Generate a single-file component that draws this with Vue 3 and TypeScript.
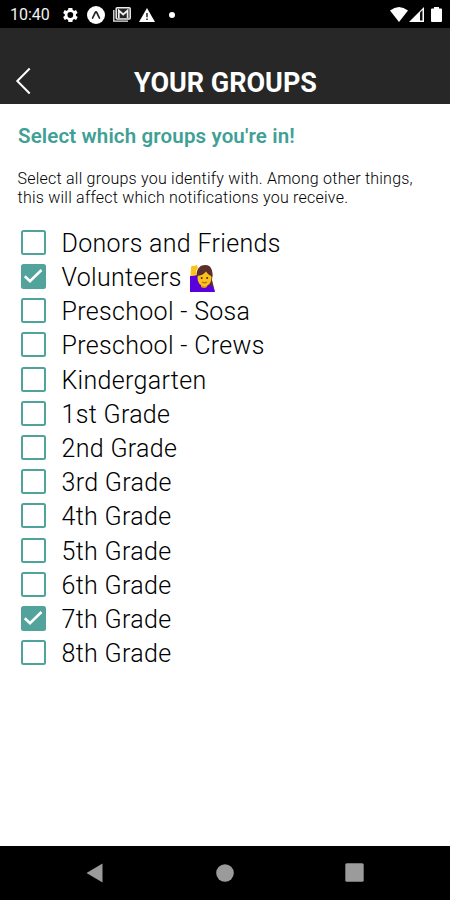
<script setup lang="ts">
import { ref } from 'vue'

interface Group {
  name: string
  selected: boolean
  emoji?: boolean
}

const groups = ref<Group[]>([
  { name: 'Donors and Friends', selected: false },
  { name: 'Volunteers', selected: true, emoji: true },
  { name: 'Preschool - Sosa', selected: false },
  { name: 'Preschool - Crews', selected: false },
  { name: 'Kindergarten', selected: false },
  { name: '1st Grade', selected: false },
  { name: '2nd Grade', selected: false },
  { name: '3rd Grade', selected: false },
  { name: '4th Grade', selected: false },
  { name: '5th Grade', selected: false },
  { name: '6th Grade', selected: false },
  { name: '7th Grade', selected: true },
  { name: '8th Grade', selected: false },
])

function toggle(group: Group): void {
  group.selected = !group.selected
}
</script>

<template>
  <div class="screen">
    <div class="status">
      <span class="clock">10:40</span>
      <svg class="gear" width="16" height="16" viewBox="2 2 20 20">
        <path fill="#fff" fill-rule="evenodd" d="M19.4 13a7.5 7.5 0 0 0 0-2l2.1-1.6-2-3.5-2.5 1a7.5 7.5 0 0 0-1.7-1L15 3.200h-5l-.4 2.700a7.500 7.500 0 0 0-1.700 1l-2.500-1-2 3.500L5.500 11a7.500 7.500 0 0 0 0 2l-2.100 1.600 2 3.500 2.500-1a7.500 7.500 0 0 0 1.700 1l.4 2.700h5l.4-2.700a7.500 7.500 0 0 0 1.700-1l2.500 1 2-3.500zM12.400 15.600a3.600 3.600 0 1 1 0-7.200 3.600 3.600 0 0 1 0 7.200z" />
      </svg>
      <svg class="expo" width="18" height="18" viewBox="0 0 18 18">
        <circle cx="9" cy="9" r="9" fill="#fff" />
        <path d="M5.600 12 8.200 6.600q.8-1.400 1.600 0l2.600 5.400" fill="none" stroke="#222" stroke-width="1.700" stroke-linecap="round" />
      </svg>
      <svg class="mail" width="18" height="15" viewBox="0 0 18 15">
        <path d="M.8 3v11.200H15" fill="none" stroke="#eee" stroke-width="1.300" />
        <rect x="3.200" y=".8" width="14" height="11.200" rx="1" fill="#222" stroke="#eee" stroke-width="1.500" />
        <path d="M5.800 11V3.500l4.400 4 4.400-4V11" fill="none" stroke="#eee" stroke-width="1.700" />
      </svg>
      <svg class="warning" width="16" height="14" viewBox="0 0 16 14">
        <path d="M8 0 16 14H0z" fill="#fff" />
        <path d="M8 5v4.200M8 10.500v1.600" stroke="#222" stroke-width="1.500" />
      </svg>
      <span class="more" />
      <svg class="wifi" width="18" height="15" viewBox="0 0 18 15">
        <path d="M0 3.500Q9-3.500 18 3.500L9 15z" fill="#fff" />
      </svg>
      <svg class="signal" width="15" height="15" viewBox="0 0 15 15">
        <path d="M15 0v15H0z" fill="#fff" />
        <path d="M11 5.500 13.500 3v10.500H11z" fill="#111" />
      </svg>
      <svg class="battery" width="11" height="15" viewBox="0 0 11 15">
        <path d="M3 0h5v1.500h2q1 0 1 1V14q0 1-1 1H1q-1 0-1-1V2.500q0-1 1-1h2z" fill="#fff" />
      </svg>
    </div>

    <header class="header">
      <button class="back" aria-label="Back">
        <svg width="16" height="28" viewBox="0 0 16 28">
          <path d="M14.700 1.500 2.300 14l12.400 12.500" fill="none" stroke="#fff" stroke-width="2" />
        </svg>
      </button>
      <h1 class="title">YOUR GROUPS</h1>
    </header>

    <main class="content">
      <h2 class="heading">Select which groups you're in!</h2>
      <p class="description">Select all groups you identify with. Among other things,<br />this will affect which notifications you receive.</p>
      <ul class="groups">
        <li v-for="group in groups" :key="group.name" class="group" @click="toggle(group)">
          <span class="box" :class="{ checked: group.selected }">
            <svg v-if="group.selected" width="24" height="24" viewBox="0 0 24 24">
              <path d="m3.800 12.300 5.200 5L20.500 6" fill="none" stroke="#fff" stroke-width="2.600" />
            </svg>
          </span>
          <span class="name">{{ group.name }}</span>
          <svg v-if="group.emoji" class="emoji" width="27" height="29" viewBox="0 0 27 29">
            <path d="M8 24C6 12 7 1 16 1c8 0 8 8 7 15l2 8z" fill="#5b302b" />
            <path d="M1 28V12l7-1 2 9q9-1 14 3 2 2 2 5z" fill="#5a00dc" />
            <path d="M1.500 12 2 3q1-2 3-1l3-1 1 3-2 3 1 4z" fill="#fcc21b" />
            <path d="M12 20h6v3q-3 2-6 0z" fill="#e59600" />
            <ellipse cx="15.500" cy="14" rx="7" ry="8.500" fill="#fcc21b" />
            <path d="M8 12Q8.500 3.500 16 3.500t7.500 9q-4-1-6.500-5-3 4-9 4.500z" fill="#5b302b" />
            <circle cx="12.700" cy="14" r="1" fill="#4d2b22" />
            <circle cx="18.200" cy="14" r="1" fill="#4d2b22" />
            <path d="M13 18q2.500 1.800 5 0" fill="none" stroke="#b56b15" stroke-width="1.200" />
          </svg>
        </li>
      </ul>
    </main>

    <nav class="navbar">
      <svg width="17" height="20" viewBox="0 0 17 20"><path d="M16.500.5v19L.5 10z" fill="#9b9b9b" /></svg>
      <svg class="home" width="18" height="18" viewBox="0 0 18 18"><circle cx="9" cy="9" r="8.800" fill="#9b9b9b" /></svg>
      <svg width="19" height="19" viewBox="0 0 19 19"><rect x=".3" y=".3" width="18.400" height="18.400" rx="1.500" fill="#9b9b9b" /></svg>
    </nav>
  </div>
</template>

<style>
body {
  margin: 0;
  background: #fff;
}
</style>

<style scoped>
.screen {
  width: 450px;
  height: 900px;
  display: flex;
  flex-direction: column;
  overflow: hidden;
  background: #fff;
  color: #000;
  font-family: Roboto, "Liberation Sans", sans-serif;
}
svg {
  display: block;
  flex: none;
}
.status {
  height: 28px;
  box-sizing: border-box;
  padding: 1px 8px 0 10px;
  display: flex;
  align-items: center;
  flex: none;
  background: #000;
  color: #f2f2f2;
}
.clock {
  width: 52px;
  font-size: 16px;
  line-height: 28px;
}
.expo {
  margin-left: 9px;
}
.mail {
  margin-left: 8px;
}
.warning {
  margin-left: 8px;
}
.more {
  width: 6px;
  height: 6px;
  margin-left: 14px;
  border-radius: 50%;
  background: #fff;
}
.wifi {
  margin-left: auto;
}
.signal {
  margin-left: 1px;
}
.battery {
  margin-left: 7px;
}
.header {
  height: 76px;
  box-sizing: border-box;
  flex: none;
  padding-top: 29px;
  display: grid;
  grid-template-columns: 48px 1fr 48px;
  align-items: center;
  background: #272727;
}
.back {
  padding: 0 0 0 15px;
  border: 0;
  background: none;
}
.title {
  margin: 0;
  padding: 4px 0 0 1px;
  color: #fff;
  font-size: 27px;
  line-height: 32px;
  font-weight: 700;
  text-align: center;
  white-space: nowrap;
}
.content {
  flex: 1;
  min-height: 0;
  padding: 20px 18px 0;
}
.heading {
  margin: 0;
  color: #41a096;
  font-size: 20.500px;
  line-height: 24px;
  font-weight: 600;
  letter-spacing: 0.140px;
  white-space: nowrap;
}
.description {
  margin: 21px 0 0 -0.500px;
  color: #000;
  font-size: 16px;
  line-height: 19px;
  font-weight: 300;
  letter-spacing: 0.230px;
  white-space: nowrap;
}
.groups {
  margin: 18.300px 0 0;
  padding: 0 0 0 3px;
  list-style: none;
}
.group {
  height: 34.200px;
  display: flex;
  align-items: center;
}
.box {
  width: 25px;
  height: 25px;
  box-sizing: border-box;
  flex: none;
  border: 2px solid #4fa39b;
  border-radius: 2.500px;
}
.box.checked {
  border: 0;
  background: #52a39b;
}
.name {
  margin-left: 15.500px;
  padding-top: 3px;
  font-size: 25px;
  line-height: 32px;
  font-weight: 300;
  letter-spacing: 0.320px;
  white-space: nowrap;
}
.emoji {
  margin: 3px 0 0 7.500px;
}
.navbar {
  height: 54.500px;
  box-sizing: border-box;
  padding: 0 86px 0 86px;
  display: flex;
  align-items: center;
  justify-content: space-between;
  flex: none;
  background: #000;
}
.home {
  margin-left: 2px;
}
</style>
